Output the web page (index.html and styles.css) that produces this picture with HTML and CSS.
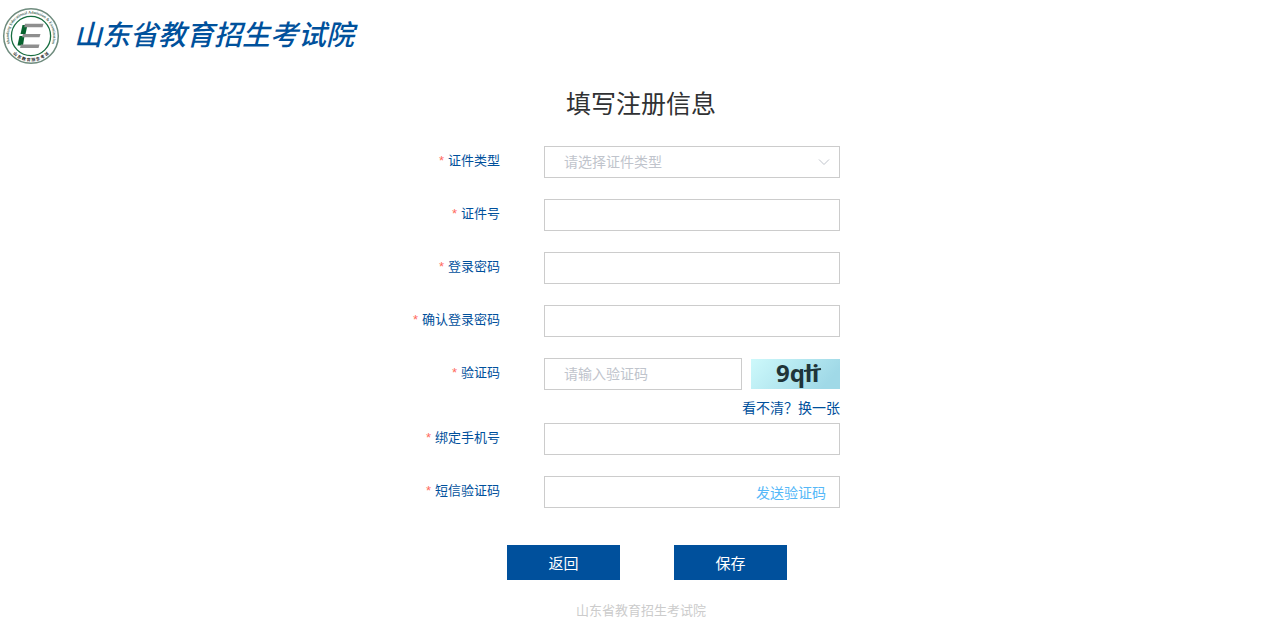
FILE: index.html
```html
<!DOCTYPE html>
<html lang="zh-CN">
<head>
    <meta charset="UTF-8">
    <meta name="viewport" content="width=device-width, initial-scale=1.0">
    <title>填写注册信息</title>
    <link rel="stylesheet" href="styles.css">
</head>
<body>
    <!-- 顶部标识 -->
    <header class="header">
        <svg class="emblem" viewBox="0 0 58 58" aria-hidden="true">
            <defs>
                <path id="arc-top" d="M8.9 38.3A22.2 22.2 0 1 1 49.1 38.3"/>
                <path id="arc-bottom" d="M3.7 29A25.3 25.3 0 0 0 54.3 29"/>
            </defs>
            <circle cx="29" cy="29" r="27.3" fill="#fff" stroke="#6f8c7e" stroke-width="1.5"/>
            <circle cx="29" cy="29" r="19.6" fill="#fff" stroke="#176d40" stroke-width="1.3"/>
            <text class="emblem-en"><textPath href="#arc-top" startOffset="50%">Shandong Educational Admission &amp; Examination</textPath></text>
            <text class="emblem-cn"><textPath href="#arc-bottom" startOffset="50%">山 东 教 育 招 生 考 试</textPath></text>
            <path d="M20.5 18H25.5L23.5 27H18.5Z" fill="#07632f"/>
            <path d="M17.5 29H22.5L21 38.5H15.5Z" fill="#07632f"/>
            <path d="M23 16.7H41.5L40.5 20.2H22.2Z" fill="#8f8f8f"/>
            <path d="M21 27H38.5L37.5 30.2H20Z" fill="#8f8f8f"/>
            <path d="M19 37.6H37.5L36.5 41H18Z" fill="#8f8f8f"/>
        </svg>
        <div class="site-name">山东省教育招生考试院</div>
    </header>

    <main class="main">
        <h1 class="title">填写注册信息</h1>

        <form class="form">
            <div class="row">
                <label class="label" for="card-type">证件类型</label>
                <div class="select-box">
                    <select class="field select" id="card-type">
                        <option value="">请选择证件类型</option>
                    </select>
                    <svg class="arrow" viewBox="0 0 12 8" aria-hidden="true">
                        <path d="M1 1.5L6 6.5L11 1.5" fill="none" stroke="#c0c4cc"/>
                    </svg>
                </div>
            </div>
            <div class="row">
                <label class="label" for="card-no">证件号</label>
                <input class="field" type="text" id="card-no">
            </div>
            <div class="row">
                <label class="label" for="password">登录密码</label>
                <input class="field" type="password" id="password">
            </div>
            <div class="row">
                <label class="label" for="password2">确认登录密码</label>
                <input class="field" type="password" id="password2">
            </div>
            <div class="row captcha-row">
                <label class="label" for="captcha">验证码</label>
                <div class="captcha-box">
                    <input class="field" type="text" id="captcha" placeholder="请输入验证码">
                    <svg class="captcha-img" viewBox="0 0 89 30">
                        <defs>
                            <linearGradient id="captcha-bg" x1="0" y1="0" x2="1" y2="0.3">
                                <stop offset="0" stop-color="#cdf9fb"/>
                                <stop offset="1" stop-color="#a0d9e7"/>
                            </linearGradient>
                        </defs>
                        <rect width="89" height="30" fill="url(#captcha-bg)"/>
                        <text class="captcha-text" x="25" y="23">9qli</text>
                        <path d="M53 12L70 10" stroke="#1f3438" stroke-width="2"/>
                    </svg>
                </div>
                <a class="refresh" href="#">看不清？换一张</a>
            </div>
            <div class="row">
                <label class="label" for="phone">绑定手机号</label>
                <input class="field" type="tel" id="phone">
            </div>
            <div class="row">
                <label class="label" for="sms-code">短信验证码</label>
                <div class="sms-box">
                    <input class="sms-input" type="text" id="sms-code">
                    <button class="send-btn" type="button">发送验证码</button>
                </div>
            </div>

            <!-- 操作按钮 -->
            <div class="actions">
                <button class="btn" type="button">返回</button>
                <button class="btn" type="submit">保存</button>
            </div>
        </form>
    </main>

    <footer class="footer">山东省教育招生考试院</footer>
</body>
</html>
```
FILE: styles.css
```css
* {
    margin: 0;
    padding: 0;
    box-sizing: border-box;
}

body {
    background-color: #fff;
    font-family: "Liberation Sans", "Noto Sans CJK SC", sans-serif;
    font-size: 14px;
}

input,
select,
button {
    font-family: inherit;
    font-size: 14px;
}

/* 顶部 */
.header {
    display: flex;
    align-items: center;
    gap: 14px;
    height: 72px;
    padding-left: 2px;
}

.emblem {
    width: 58px;
    height: 58px;
}

.emblem-en {
    font-family: "Liberation Serif", serif;
    font-size: 4px;
    font-weight: bold;
    text-anchor: middle;
    fill: #3e6654;
}

.emblem-cn {
    font-size: 4px;
    font-weight: bold;
    text-anchor: middle;
    fill: #222;
}

.site-name {
    color: #00519c;
    font-size: 28px;
    font-style: italic;
    font-weight: 500;
    line-height: 40px;
}

/* 表单区域 */
.main {
    padding-left: 14px;
}

.title {
    color: #303133;
    font-size: 25px;
    font-weight: normal;
    line-height: 36px;
    margin: 14px 0 24px;
    text-align: center;
}

.form {
    width: 100%;
    max-width: 562px;
    margin: 0 auto;
}

.row {
    display: grid;
    grid-template-columns: 1fr 296px;
    column-gap: 44px;
    padding-right: 82px;
    margin-bottom: 21px;
}

.label {
    color: #00509c;
    font-size: 13px;
    line-height: 30px;
    text-align: right;
}

.label::before {
    content: "*";
    color: #ff6b5e;
    margin-right: 4px;
}

.field {
    width: 100%;
    min-width: 0;
    height: 32px;
    padding: 0 19px;
    border: 1px solid #ccc;
    border-radius: 0;
    background-color: #fff;
    color: #606266;
    outline: none;
}

.field::placeholder {
    color: #c0c4cc;
}

.field:focus {
    border-color: #00509c;
}

.select-box {
    position: relative;
}

.select {
    appearance: none;
    color: #c0c4cc;
}

.arrow {
    position: absolute;
    top: 12px;
    right: 10px;
    width: 12px;
    height: 8px;
    pointer-events: none;
}

/* 验证码 */
.captcha-row {
    margin-bottom: 4px;
}

.captcha-box {
    display: flex;
    align-items: center;
    gap: 9px;
}

.captcha-img {
    flex: none;
    width: 89px;
    height: 30px;
}

.captcha-text {
    font-family: "Noto Sans", sans-serif;
    font-size: 24px;
    font-weight: bold;
    fill: #1f3438;
}

.refresh {
    grid-column: 2;
    justify-self: end;
    margin-top: 8px;
    color: #00509c;
    line-height: 21px;
    text-decoration: none;
}

.sms-box {
    display: flex;
    height: 32px;
    border: 1px solid #ccc;
}

.sms-input {
    flex: 1;
    min-width: 0;
    padding-left: 19px;
    border: none;
    outline: none;
}

.send-btn {
    padding: 0 13px;
    border: none;
    background: none;
    color: #55b8f8;
    cursor: pointer;
}

/* 按钮 */
.actions {
    display: flex;
    justify-content: center;
    gap: 54px;
    padding: 16px 0 0 12px;
}

.btn {
    width: 113px;
    height: 35px;
    border: none;
    background-color: #00509c;
    color: #fff;
    font-size: 15px;
    cursor: pointer;
}

.btn:hover {
    background-color: #00427f;
}

/* 底部 */
.footer {
    padding: 21px 0 6px 14px;
    color: #ccc;
    font-size: 13px;
    line-height: 20px;
    text-align: center;
}
```
